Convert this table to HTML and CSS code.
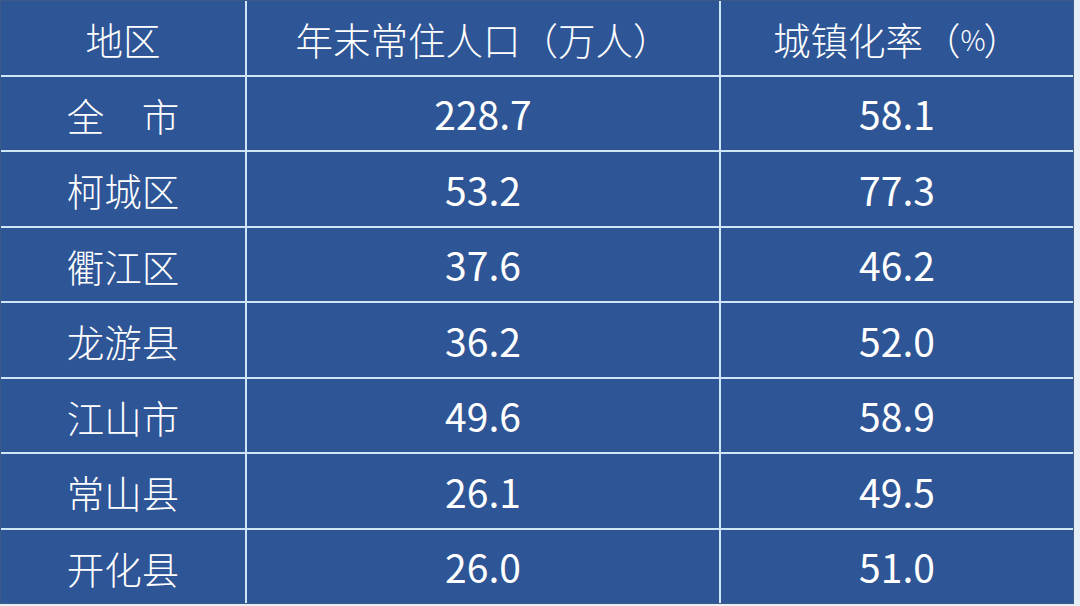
FILE: index.html
```html
<!DOCTYPE html>
<html lang="zh-CN">
<head>
<meta charset="utf-8">
<link rel="stylesheet" href="styles.css">
</head>
<body>
<div class="table">
  <div class="cell">地区</div><div class="cell">年末常住人口（万人）</div><div class="cell">城镇化率（<span class="pct">%</span>）</div>
  <div class="cell">全　市</div><div class="cell num">228.7</div><div class="cell num">58.1</div>
  <div class="cell">柯城区</div><div class="cell num">53.2</div><div class="cell num">77.3</div>
  <div class="cell">衢江区</div><div class="cell num">37.6</div><div class="cell num">46.2</div>
  <div class="cell">龙游县</div><div class="cell num">36.2</div><div class="cell num">52.0</div>
  <div class="cell">江山市</div><div class="cell num">49.6</div><div class="cell num">58.9</div>
  <div class="cell">常山县</div><div class="cell num">26.1</div><div class="cell num">49.5</div>
  <div class="cell">开化县</div><div class="cell num">26.0</div><div class="cell num">51.0</div>
</div>
</body>
</html>
```
FILE: styles.css
```css
html, body {
  margin: 0;
  padding: 0;
  background: #e6eef6;
}
.table {
  width: 1074px;
  height: 604px;
  box-sizing: border-box;
  border: 1px solid #3b5b86;
  background: #cfe6f6;
  display: grid;
  grid-template-columns: 244px 472px 1fr;
  grid-template-rows: repeat(8, 1fr);
  gap: 2px;
}
.cell {
  background: #2e5596;
  color: #ffffff;
  display: flex;
  align-items: center;
  justify-content: center;
  font-family: "Noto Sans CJK SC", "Noto Sans", sans-serif;
  font-size: 37.5px;
  font-weight: 300;
  padding-top: 2px;
}
.num {
  font-size: 39px;
  font-weight: 400;
  padding-top: 0;
}
.pct {
  font-size: 28px;
  letter-spacing: -2px;
}
```
